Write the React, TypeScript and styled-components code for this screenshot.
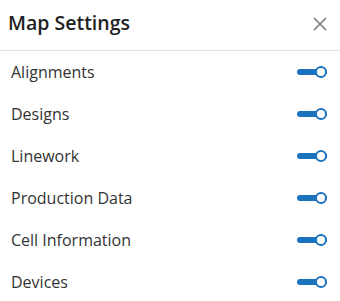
import styled, { createGlobalStyle } from 'styled-components';

const GlobalStyle = createGlobalStyle`
  body {
    margin: 0;
    background: #ffffff;
    font-family: 'Open Sans', 'Noto Sans', sans-serif;
  }
`;

const Panel = styled.div`
  width: 340px;
  background: #ffffff;
`;

const Header = styled.div`
  display: flex;
  align-items: center;
  justify-content: space-between;
  height: 50px;
  padding: 0 13px 0 8px;
  border-bottom: 1px solid #e2e2e2;
  box-sizing: content-box;
`;

const Title = styled.h2`
  margin: 0;
  font-size: 19.5px;
  font-weight: 600;
  color: #222222;
  padding-bottom: 6px;
`;

const CloseButton = styled.button`
  display: flex;
  padding: 0;
  border: 0;
  background: none;
  cursor: pointer;
  color: #7a7a7a;
  margin-bottom: 3px;
`;

const List = styled.div`
  display: flex;
  flex-direction: column;
`;

const Row = styled.label`
  display: flex;
  align-items: center;
  justify-content: space-between;
  height: 42px;
  padding: 0 13px 0 11px;
`;

const Label = styled.span`
  font-size: 16px;
  color: #333333;
`;

const Toggle = styled.span<{ $on: boolean }>`
  position: relative;
  width: 30px;
  height: 6px;
  border-radius: 3px;
  background: ${(p) => (p.$on ? '#1b72bd' : '#c4c4c4')};

  &::after {
    content: '';
    position: absolute;
    top: -3px;
    ${(p) => (p.$on ? 'right: 0;' : 'left: 0;')}
    width: 8px;
    height: 8px;
    border-radius: 50%;
    background: #ffffff;
    border: 2px solid ${(p) => (p.$on ? '#1b72bd' : '#c4c4c4')};
  }
`;

const layers = ['Alignments', 'Designs', 'Linework', 'Production Data', 'Cell Information', 'Devices'];

export default function App() {
  return (
    <Panel>
      <GlobalStyle />
      <Header>
        <Title>Map Settings</Title>
        <CloseButton aria-label="Close">
          <svg width="14" height="14" viewBox="0 0 14 14">
            <path d="M1 1L13 13M13 1L1 13" stroke="currentColor" strokeWidth="1.6" fill="none" />
          </svg>
        </CloseButton>
      </Header>
      <List>
        {layers.map((name) => (
          <Row key={name}>
            <Label>{name}</Label>
            <Toggle $on />
          </Row>
        ))}
      </List>
    </Panel>
  );
}
